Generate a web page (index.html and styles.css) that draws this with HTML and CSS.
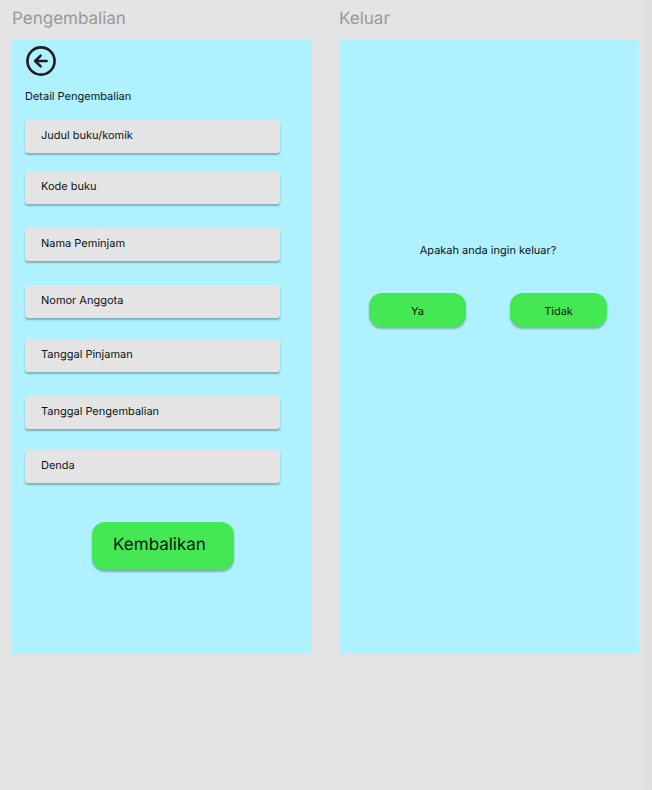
FILE: index.html
```html
<!DOCTYPE html>
<html lang="id">
<head>
<meta charset="utf-8">
<meta name="viewport" content="width=device-width, initial-scale=1">
<title>Pengembalian</title>
<link rel="stylesheet" href="styles.css">
</head>
<body>
<main class="board">
  <section class="frame">
    <h2 class="frame-name">Pengembalian</h2>
    <form class="screen screen-return">
      <button class="back" type="button" aria-label="Kembali">
        <svg viewBox="0 0 32 32" fill="none" stroke="currentColor" stroke-width="2.6" stroke-linecap="round" stroke-linejoin="round" aria-hidden="true">
          <circle cx="16" cy="16" r="13.6"/>
          <path d="M21.6 16H10.6M15.6 10.6L10.2 16l5.4 5.4"/>
        </svg>
      </button>
      <h1 class="title">Detail Pengembalian</h1>
      <div class="fields">
        <input class="field" type="text" placeholder="Judul buku/komik" aria-label="Judul buku/komik">
        <input class="field near" type="text" placeholder="Kode buku" aria-label="Kode buku">
        <input class="field" type="text" placeholder="Nama Peminjam" aria-label="Nama Peminjam">
        <input class="field" type="text" placeholder="Nomor Anggota" aria-label="Nomor Anggota">
        <input class="field mid" type="text" placeholder="Tanggal Pinjaman" aria-label="Tanggal Pinjaman">
        <input class="field" type="text" placeholder="Tanggal Pengembalian" aria-label="Tanggal Pengembalian">
        <input class="field mid" type="text" placeholder="Denda" aria-label="Denda">
      </div>
      <button class="button submit" type="button">Kembalikan</button>
    </form>
  </section>
  <section class="frame">
    <h2 class="frame-name">Keluar</h2>
    <div class="screen screen-exit">
      <p class="question">Apakah anda ingin keluar?</p>
      <div class="choices">
        <button class="button choice" type="button">Ya</button>
        <button class="button choice" type="button">Tidak</button>
      </div>
    </div>
  </section>
</main>
</body>
</html>
```
FILE: styles.css
```css
* {
  box-sizing: border-box;
}

body {
  margin: 0;
  min-height: 100vh;
  background: linear-gradient(to left, #dedede, #e4e4e4 12px);
  color: #0b1517;
  font: 11px/16px Inter, sans-serif;
  text-rendering: geometricPrecision;
}

.board {
  display: grid;
  grid-template-columns: 1fr 1fr;
  gap: 27px;
  padding: 9px 13px 9px 12px;
}

.frame {
  display: flex;
  flex-direction: column;
}

.frame-name {
  margin: 0 0 11px;
  color: #999;
  font-size: 17px;
  font-weight: 400;
  line-height: 20px;
}

.screen {
  flex: 1;
  background: #aff1ff;
}

.screen-return {
  display: flex;
  flex-direction: column;
  padding: 5px 32px 84px 13px;
}

.back {
  width: 32px;
  height: 32px;
  padding: 0;
  border: 0;
  background: none;
  color: #1c1e1f;
}

.back svg {
  display: block;
}

.title {
  margin: 11px 0 16px;
  font-size: 11px;
  font-weight: 400;
  line-height: 16px;
}

.fields {
  display: flex;
  flex-direction: column;
}

.field {
  width: 100%;
  height: 33px;
  margin-top: 24px;
  padding: 0 16px 3px;
  border: 0;
  border-radius: 3px;
  background: #e4e4e4;
  box-shadow: 0 2px 2px rgba(0, 0, 0, 0.28);
  color: inherit;
  font: inherit;
  text-rendering: inherit;
}

.field:first-child {
  margin-top: 0;
}

.field.near {
  margin-top: 18px;
}

.field.mid {
  margin-top: 21px;
}

.field::placeholder {
  color: inherit;
  opacity: 1;
}

.button {
  border: 0;
  border-radius: 13px;
  background: #43e853;
  box-shadow: 0 2px 2px rgba(0, 0, 0, 0.28);
  color: #0b150c;
  font: inherit;
  text-rendering: inherit;
}

.submit {
  align-self: center;
  width: 142px;
  height: 48px;
  margin: 39px 0 0 20px;
  padding: 0 6px 2px 0;
  font-size: 17px;
}

.screen-exit {
  padding: 202px 32px 0 30px;
}

.question {
  margin: 0;
  text-align: center;
}

.choices {
  display: flex;
  justify-content: space-between;
  margin-top: 35px;
}

.choice {
  width: 97px;
  height: 34px;
  padding: 2px 0 0;
}
```
